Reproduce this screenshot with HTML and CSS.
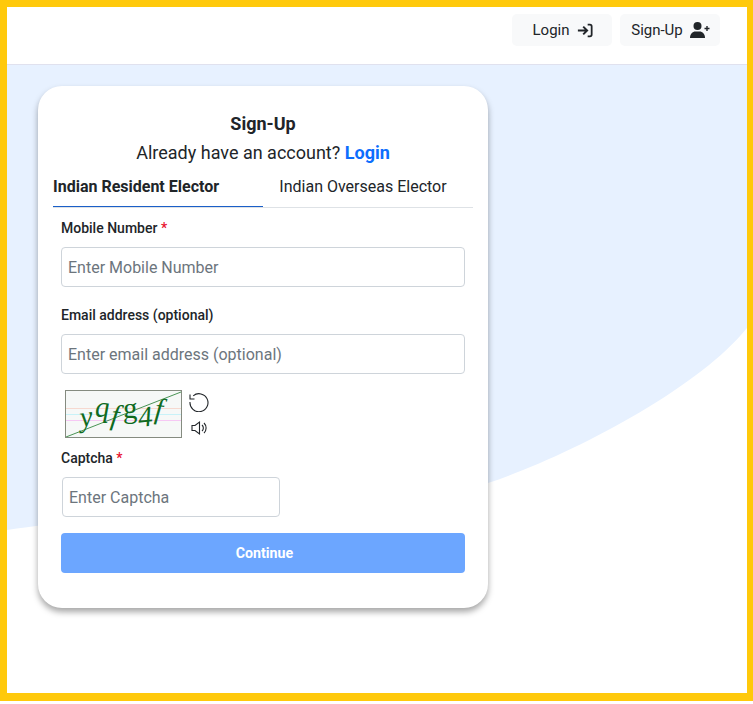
FILE: index.html
```html
<!DOCTYPE html>
<html lang="en">
<head>
  <meta charset="UTF-8">
  <meta name="viewport" content="width=device-width, initial-scale=1.0">
  <title>Sign-Up</title>
  <link rel="stylesheet" href="styles.css">
</head>
<body>
  <div class="frame">
    <header class="topbar">
      <a class="nav-btn">Login
        <svg class="nav-icon" viewBox="0 0 18 16" width="16" height="15">
          <path d="M1 8h9M7 3.600 11.400 8 7 12.400" fill="none" stroke="#212529" stroke-width="2.200"/>
          <path d="M12 1.500h2.500a2 2 0 0 1 2 2v9a2 2 0 0 1-2 2H12" fill="none" stroke="#212529" stroke-width="2"/>
        </svg>
      </a>
      <a class="nav-btn">Sign-Up
        <svg class="nav-icon" viewBox="0 0 20 16" width="20" height="16">
          <circle cx="7.500" cy="4" r="4" fill="#212529"/>
          <path d="M0 16c0-4 2.500-6.500 5.500-6.500h4c3 0 5.500 2.500 5.500 6.500z" fill="#212529"/>
          <path d="M17 4v5M14.500 6.500h5" stroke="#212529" stroke-width="1.400"/>
        </svg>
      </a>
    </header>

    <main class="content">
      <svg class="wave" viewBox="0 0 740 465" preserveAspectRatio="none">
        <path d="M0 465C120 448 330 430 481 418C560 392 690 325 740 263V0H0z" fill="#e7f1ff"/>
      </svg>

      <section class="card">
        <h1 class="card-title">Sign-Up</h1>
        <p class="card-sub">Already have an account? <a class="link">Login</a></p>

        <div class="tabs">
          <div class="tab active">Indian Resident Elector</div>
          <div class="tab">Indian Overseas Elector</div>
        </div>

        <form class="form">
          <label class="label">Mobile Number <span class="req">*</span></label>
          <input class="input" type="text" placeholder="Enter Mobile Number">

          <label class="label label-email">Email address (optional)</label>
          <input class="input" type="text" placeholder="Enter email address (optional)">

          <div class="captcha-row">
            <svg class="captcha" viewBox="0 0 115 46" width="117" height="48">
              <rect width="115" height="46" fill="#f6f8f7"/>
              <path d="M0 17.500h115" stroke="#f6d9d0"/>
              <path d="M0 23.500h115" stroke="#c8f2f8"/>
              <path d="M0 29.500h115" stroke="#f6c8f4"/>
              <path d="M0 46 115 1" stroke="#1d7a2c" stroke-width=".8"/>
              <g class="captcha-text">
                <text x="15" y="36" transform="rotate(-8 15 36)">y</text>
                <text x="29" y="26">q</text>
                <text x="44" y="33" transform="rotate(8 44 33)">f</text>
                <text class="upright" x="57" y="27">g</text>
                <text x="73" y="36" transform="rotate(-6 73 36)">4</text>
                <text x="88" y="27" transform="rotate(6 88 27)">f</text>
              </g>
            </svg>
            <div class="captcha-tools">
              <svg viewBox="0 0 20 20" width="20" height="20">
                <path d="M4.200 3.800A9 9 0 1 1 1 10" fill="none" stroke="#212529" stroke-width="1.100"/>
                <path d="M1 2.500v4.500h4.500" fill="none" stroke="#212529" stroke-width="1.100"/>
              </svg>
              <svg viewBox="0 0 16 16" width="16" height="16">
                <path d="M1 5.500h3L8.500 2v12L4 10.500H1z" fill="none" stroke="#212529" stroke-width="1.100"/>
                <path d="M11 5a4 4 0 0 1 0 6M13 3a7 7 0 0 1 0 10" fill="none" stroke="#212529" stroke-width="1.100"/>
              </svg>
            </div>
          </div>

          <label class="label label-captcha">Captcha <span class="req">*</span></label>
          <input class="input input-captcha" type="text" placeholder="Enter Captcha">

          <button class="submit" type="button">Continue</button>
        </form>
      </section>
    </main>
  </div>
</body>
</html>
```

FILE: styles.css
```css
/* page frame */
* {
  box-sizing: border-box;
}

body {
  margin: 0;
  font-family: 'Roboto', sans-serif;
  color: #212529;
  background-color: #fff;
}

.frame {
  height: 701px;
  display: flex;
  flex-direction: column;
  border-style: solid;
  border-color: #ffc90b;
  border-width: 7px 6px 8px 7px;
  overflow: hidden;
}

/* top bar */
.topbar {
  height: 58px;
  flex: none;
  display: flex;
  justify-content: flex-end;
  gap: 8px;
  padding: 7px 27px 0 0;
  background-color: #fff;
  border-bottom: 1px solid #e0e1ee;
}

.nav-btn {
  width: 100px;
  height: 32px;
  padding-left: 1px;
  display: flex;
  align-items: center;
  justify-content: center;
  gap: 7px;
  background-color: #f8f9fa;
  border-radius: 5px;
  font-size: 15px;
  color: #212529;
}

.content {
  position: relative;
  flex: 1;
  padding: 21px 0 0 31px;
}

.wave {
  position: absolute;
  top: 0;
  left: 0;
  width: 740px;
  height: 465px;
}

/* card */
.card {
  position: relative;
  width: 450px;
  height: 522px;
  padding: 20px 15px 0;
  background-color: #fff;
  border-radius: 24px;
  box-shadow: 0 4px 6px rgba(0, 0, 0, 0.35);
}

.card-title {
  margin: 0;
  font-size: 18px;
  line-height: 35px;
  font-weight: 700;
  text-align: center;
}

.card-sub {
  margin: 0;
  font-size: 18px;
  line-height: 24px;
  text-align: center;
}

.link {
  color: #0d6efd;
  font-weight: 700;
}

.tabs {
  display: flex;
  margin-top: 4px;
  border-bottom: 1px solid #dee2e6;
}

.tab {
  width: 50%;
  height: 38px;
  padding: 6px 10px 0 0;
  font-size: 16px;
  line-height: 24px;
  text-align: center;
}

.tab.active {
  padding-right: 0;
  font-weight: 700;
  border-bottom: 1px solid #1a5fc8;
  margin-bottom: -1px;
  text-align: left;
}

/* form */
.form {
  display: flex;
  flex-direction: column;
  align-items: flex-start;
  padding: 0 8px;
}

.label {
  margin-top: 10px;
  font-size: 14px;
  line-height: 20px;
  font-weight: 500;
}

.req {
  color: #e8112d;
}

.input {
  width: 100%;
  height: 40px;
  margin-top: 9px;
  padding: 0 6px;
  font-family: inherit;
  font-size: 16px;
  color: #212529;
  background-color: #fff;
  border: 1px solid #ced4da;
  border-radius: 4px;
}

.input::placeholder {
  color: #6c757d;
  opacity: 1;
}

.label-email {
  margin-top: 18px;
}

.captcha-row {
  display: flex;
  align-items: center;
  gap: 7px;
  margin-top: 16px;
  padding-left: 4px;
}

.captcha {
  border: 1px solid #858b80;
}

.captcha-text text {
  font-family: 'Liberation Serif', serif;
  font-style: italic;
  font-size: 29px;
  fill: #0f6b1f;
}

.captcha-text .upright {
  font-style: normal;
}

.captcha-tools {
  display: flex;
  flex-direction: column;
  align-items: center;
  gap: 8px;
}

.label-captcha {
  margin-top: 10px;
}

.input-captcha {
  width: 218px;
  margin-left: 1px;
}

.submit {
  width: 100%;
  height: 40px;
  margin-top: 16px;
  padding: 0 0 0 3px;
  font-family: inherit;
  font-size: 14.2px;
  font-weight: 700;
  color: #fff;
  background-color: #6ca6ff;
  border: none;
  border-radius: 4px;
}
```
